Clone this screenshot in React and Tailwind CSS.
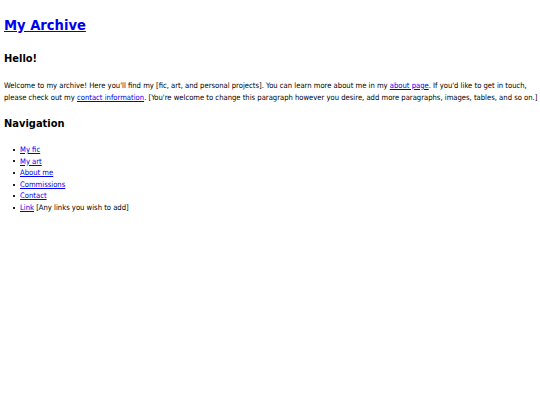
const links = ["My fic", "My art", "About me", "Commissions", "Contact"]

function Bullet() {
  return <span className="mr-[5px] ml-[9px] h-[2px] w-[2px] shrink-0 bg-[#222]"></span>
}

export default function App() {
  return (
    <div className="min-h-[405px] bg-white pt-[15px] pr-[2px] pl-[4px] font-['DejaVu_Sans',sans-serif] font-stretch-condensed text-black">
      <h1 className="text-[14.6px] font-bold leading-[20px]">
        <a href="#" className="text-[#0000ee] underline">My Archive</a>
      </h1>

      <h2 className="mt-[16px] text-[11px] font-bold leading-[16px]">Hello!</h2>

      <p className="mt-[13px] text-[7.6px] leading-[12px]">
        Welcome to my archive! Here you'll find my [fic, art, and personal projects]. You can learn more about me in my{" "}
        <a href="#" className="text-[#0000ee] underline">about page</a>. If you'd like to get in touch, please check out my{" "}
        <a href="#" className="text-[#0000ee] underline">contact information</a>. [You're welcome to change this paragraph however you desire, add more paragraphs, images, tables, and so on.]
      </p>

      <h2 className="mt-[12px] text-[11px] font-bold leading-[16px]">Navigation</h2>

      <ul className="mt-[12px] text-[7.6px] leading-[11.6px]">
        {links.map((l) => (
          <li key={l} className="flex items-center">
            <Bullet />
            <a href="#" className="text-[#0000ee] underline">{l}</a>
          </li>
        ))}
        <li className="flex items-center">
          <Bullet />
          <span>
            <a href="#" className="text-[#0000ee] underline">Link</a> [Any links you wish to add]
          </span>
        </li>
      </ul>
    </div>
  )
}
